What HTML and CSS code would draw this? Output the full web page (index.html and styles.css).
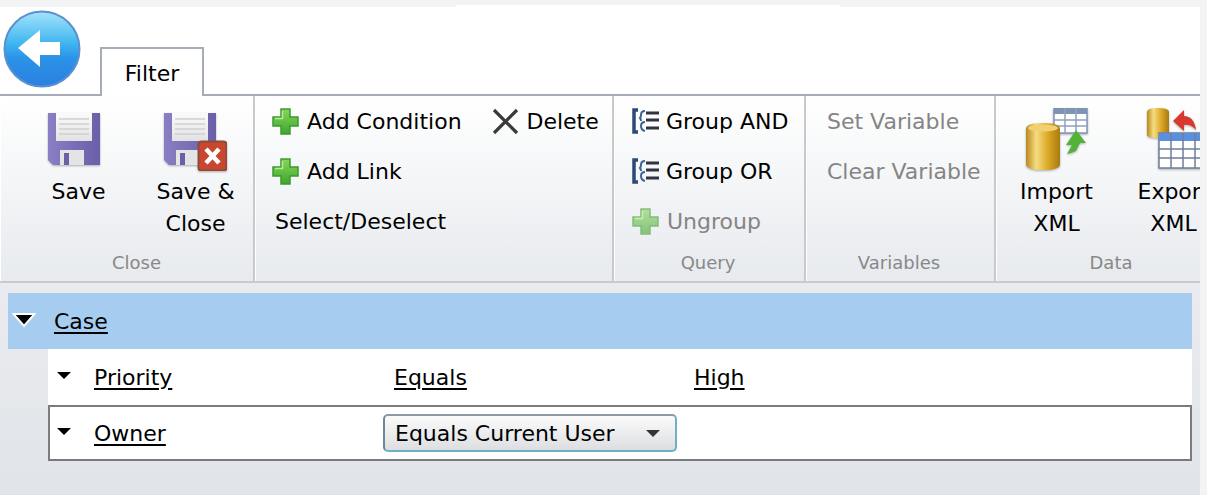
FILE: index.html
```html
<!DOCTYPE html>
<html lang="en">
<head>
<meta charset="UTF-8">
<meta name="viewport" content="width=device-width, initial-scale=1.0">
<title>Filter</title>
<link rel="stylesheet" href="styles.css">
</head>
<body>

<svg class="sprite" width="0" height="0" aria-hidden="true">
  <defs>
    <linearGradient id="backFill" x1="0" y1="0" x2="0" y2="1">
      <stop offset="0" stop-color="#a4e4fa"/>
      <stop offset="0.42" stop-color="#41b6f0"/>
      <stop offset="0.62" stop-color="#2b93e8"/>
      <stop offset="1" stop-color="#2a7fe0"/>
    </linearGradient>
    <linearGradient id="diskFill" x1="0" y1="0" x2="1" y2="0">
      <stop offset="0" stop-color="#8a7fc4"/>
      <stop offset="1" stop-color="#6a5fa8"/>
    </linearGradient>
    <linearGradient id="labelFill" x1="0" y1="0" x2="0" y2="1">
      <stop offset="0" stop-color="#fbfbfb"/>
      <stop offset="1" stop-color="#e2e2e2"/>
    </linearGradient>
    <linearGradient id="plusFill" x1="0" y1="0" x2="0" y2="1">
      <stop offset="0" stop-color="#86d65c"/>
      <stop offset="1" stop-color="#3fa62c"/>
    </linearGradient>
    <linearGradient id="barrel" x1="0" y1="0" x2="1" y2="0">
      <stop offset="0" stop-color="#b98a1c"/>
      <stop offset="0.3" stop-color="#f5dc82"/>
      <stop offset="0.65" stop-color="#dca824"/>
      <stop offset="1" stop-color="#a87a12"/>
    </linearGradient>
    <symbol id="disk" viewBox="0 0 52 52">
      <path d="M0 0H52V52H5L0 47Z" fill="url(#diskFill)"/>
      <rect x="8" y="0" width="36" height="28" fill="url(#labelFill)"/>
      <path d="M11 6H41M11 11H41M11 16H41M11 21H41" stroke="#d0d0d4" stroke-width="1.5"/>
      <rect x="12" y="37" width="24" height="15" fill="#e4e4e4"/>
      <rect x="16" y="40" width="5" height="12" fill="#6a5fa8"/>
    </symbol>
    <symbol id="plus" viewBox="0 0 27 27">
      <path d="M9 1H18V9H26V18H18V26H9V18H1V9H9Z" fill="url(#plusFill)" stroke="#3c9a2c" stroke-width="1.5"/>
      <path d="M10.5 3V10.5H3" fill="none" stroke="#b4ea90" stroke-width="1.5"/>
    </symbol>
    <symbol id="brackets" viewBox="0 0 28 26">
      <path d="M6 2H2V24H6" fill="none" stroke="#2b4a78" stroke-width="3.5"/>
      <path d="M13 3Q9 3 9 7Q9 9 8 10Q9 11 9 13" fill="none" stroke="#3f6293" stroke-width="2"/>
      <path d="M13 14Q9 14 9 18Q9 22 13 23" fill="none" stroke="#3f6293" stroke-width="2"/>
      <path d="M14 5H27M14 12H27M14 20H27" stroke="#2f343e" stroke-width="3"/>
    </symbol>
  </defs>
</svg>

<div class="app">
  <div class="notch"></div>
  <header class="titlebar">
    <svg class="back" width="78" height="78" viewBox="0 0 78 78" aria-label="Back">
      <circle cx="39" cy="39" r="37.5" fill="url(#backFill)" stroke="#5c8fd0" stroke-width="2"/>
      <path d="M15 38L37 20V32H57V45H37V57Z" fill="#fff"/>
    </svg>
    <div class="tab">Filter</div>
  </header>

  <div class="ribbon">
    <section class="group group-close">
      <div class="group-body">
        <div class="big-btn">
          <div class="big-icon">
            <svg width="62" height="57" viewBox="0 0 62 57"><use href="#disk" x="0" y="5" width="52" height="52"/></svg>
          </div>
          <span>Save</span>
        </div>
        <div class="big-btn">
          <div class="big-icon">
            <svg width="63" height="63" viewBox="0 0 63 63">
              <use href="#disk" x="0" y="5" width="52" height="52"/>
              <rect x="34.5" y="33.5" width="28" height="29" rx="3" fill="#c8472f" stroke="#8e4a3c" stroke-width="2"/>
              <path d="M42 41L55 55M55 41L42 55" stroke="#fff" stroke-width="4.5"/>
            </svg>
          </div>
          <span>Save &amp;<br>Close</span>
        </div>
      </div>
      <div class="group-label">Close</div>
    </section>

    <section class="group group-edit">
      <div class="group-body">
        <div class="small-col col-add">
          <div class="small-btn"><svg class="icon" width="27" height="27"><use href="#plus"/></svg>Add Condition</div>
          <div class="small-btn"><svg class="icon" width="27" height="27"><use href="#plus"/></svg>Add Link</div>
          <div class="small-btn plain">Select/Deselect</div>
        </div>
        <div class="small-col">
          <div class="small-btn">
            <svg class="icon" width="27" height="27" viewBox="0 0 27 27"><path d="M2 2L25 25M25 2L2 25" stroke="#3a3a3a" stroke-width="3.2"/></svg>Delete
          </div>
        </div>
      </div>
    </section>

    <section class="group group-query">
      <div class="group-body">
        <div class="small-col">
          <div class="small-btn tight"><svg class="icon" width="28" height="26"><use href="#brackets"/></svg>Group AND</div>
          <div class="small-btn tight"><svg class="icon" width="28" height="26"><use href="#brackets"/></svg>Group OR</div>
          <div class="small-btn off"><svg class="icon faded" width="27" height="27"><use href="#plus"/></svg>Ungroup</div>
        </div>
      </div>
      <div class="group-label">Query</div>
    </section>

    <section class="group group-vars">
      <div class="group-body">
        <div class="small-col">
          <div class="small-btn off">Set Variable</div>
          <div class="small-btn off">Clear Variable</div>
        </div>
      </div>
      <div class="group-label">Variables</div>
    </section>

    <section class="group group-data">
      <div class="group-body">
        <div class="big-btn">
          <div class="big-icon">
            <svg width="62" height="62" viewBox="0 0 62 62">
              <rect x="28" y="0" width="33" height="25" fill="#fff" stroke="#7f93b5" stroke-width="1.5"/>
              <rect x="28" y="0" width="33" height="6" fill="#7f93b5"/>
              <path d="M39 0V25M50 0V25M28 12H61M28 18H61" stroke="#8fa2c0" stroke-width="1.5"/>
              <path d="M0 21Q0 15 17 15Q34 15 34 21V56Q34 62 17 62Q0 62 0 56Z" fill="url(#barrel)"/>
              <ellipse cx="17" cy="20" rx="15" ry="3.5" fill="#f0d070"/>
              <path d="M41 46L46 37H40L50 22L60 35H54L50 43Q46 45 41 46Z" fill="#52b338"/>
            </svg>
          </div>
          <span>Import<br>XML</span>
        </div>
        <div class="big-btn">
          <div class="big-icon">
            <svg width="54" height="62" viewBox="0 0 54 62">
              <path d="M0 4Q0 0 11 0Q22 0 22 4V27Q22 30 11 30Q0 30 0 27Z" fill="url(#barrel)"/>
              <path d="M26 13L37 2V8Q47 8 49 22Q44 16 37 17V23Z" fill="#d8382e"/>
              <rect x="12" y="25" width="46" height="35" fill="#fff" stroke="#6d7f9c" stroke-width="1.5"/>
              <rect x="12" y="25" width="46" height="8" fill="#5a8fe0"/>
              <path d="M24 25V60M36 25V60M48 25V60M12 41H58M12 50H58" stroke="#6d7f9c" stroke-width="1.5"/>
            </svg>
          </div>
          <span>Export<br>XML</span>
        </div>
      </div>
      <div class="group-label">Data</div>
    </section>
  </div>

  <main class="content">
    <div class="tree-row case-row">
      <svg class="case-caret" width="24" height="16" viewBox="0 0 24 16"><path d="M1.5 2H22.5L12 14Z" fill="#000" stroke="#fff" stroke-width="2"/></svg>
      <a class="link">Case</a>
    </div>
    <div class="tree-row cond-row">
      <span class="caret"></span>
      <span class="cell"><a class="link">Priority</a></span>
      <span class="cell"><a class="link">Equals</a></span>
      <span class="cell"><a class="link">High</a></span>
    </div>
    <div class="tree-row cond-row is-selected">
      <span class="caret"></span>
      <span class="cell cell-short"><a class="link">Owner</a></span>
      <div class="dropdown">Equals Current User<span class="dropdown-arrow"></span></div>
    </div>
  </main>
</div>

</body>
</html>
```

FILE: styles.css
```css
html, body { height: 100%; }
body {
  margin: 0;
  background: #f1f3f5;
  font-family: "DejaVu Sans", Verdana, sans-serif;
  font-size: 22px;
  color: #000;
  overflow: hidden;
}
.sprite { display: block; }
.app {
  width: 1200px;
  height: 495px;
  display: flex; flex-direction: column;
  overflow: hidden;
}
.notch { width: 384px; height: 2px; margin: 5px 0 0 456px; background: #fff; }

/* title area */
.titlebar {
  position: relative;
  height: 87px;
  display: flex; align-items: flex-end;
  background: #fff;
  border-bottom: 2px solid #a5abb8;
}
.back { position: absolute; left: 3px; top: 3px; }
.tab {
  width: 100px; height: 45px;
  padding-top: 2px;
  margin: 0 0 -2px 100px;
  display: flex; align-items: center; justify-content: center;
  background: #fff;
  border: 2px solid #a5abb8; border-bottom: none;
}

/* ribbon */
.ribbon {
  height: 185px;
  flex: none;
  display: flex;
  background: linear-gradient(to bottom, #fff, #e7eaee);
  border-bottom: 2px solid #c9cacc;
  overflow: hidden;
}
.group {
  flex: none;
  box-sizing: border-box;
  display: flex; flex-direction: column;
  border-right: 2px solid #c8c9cb;
  box-shadow: inset 1px 0 0 #fff;
}
.group-close { width: 255px; padding-left: 20px; }
.group-edit { width: 359px; padding-left: 17px; }
.group-query { width: 192px; padding-left: 18px; }
.group-vars { width: 190px; padding-left: 21px; }
.group-data { width: 228px; padding-left: 2px; border-right: none; }
.group-body { flex: 1; display: flex; min-height: 0; }
.group-label {
  height: 28px;
  margin-bottom: 5px;
  display: flex; align-items: center; justify-content: center;
  font-size: 18px;
  color: #888;
}
.group-query .group-label { margin: 0 2px 5px -18px; }
.group-vars .group-label { margin: 0 2px 5px -21px; }

.big-btn {
  width: 117px;
  flex: none;
  padding-top: 12px;
  text-align: center;
  line-height: 32px;
}
.big-icon { height: 62px; margin-bottom: 6px; display: flex; justify-content: center; }
.big-icon svg { filter: drop-shadow(0 1px 1px rgba(0, 0, 0, 0.3)); }

.small-col { display: flex; flex-direction: column; }
.col-add { width: 219.5px; }
.small-btn {
  height: 50px;
  display: flex; align-items: center; gap: 8px;
  white-space: nowrap;
}
.small-btn.tight { gap: 6px; }
.small-btn.plain { padding-left: 3px; }
.small-btn.off { color: #858585; }
.icon { flex: none; }
.faded { opacity: 0.6; }

/* filter tree */
.content {
  flex: 1;
  padding: 10px 8px 0;
  background: linear-gradient(to bottom, #e9ebef, #e1e4e8);
}
.tree-row { height: 56px; display: flex; align-items: center; box-sizing: border-box; }
.link { color: #000; text-decoration: underline; text-underline-offset: 3px; }
.case-row { background: #a6cdf0; padding-left: 4px; }
.case-caret { margin: -2px 18px 0 0; flex: none; }
.cond-row { margin-left: 40px; padding-left: 9px; background: #fff; }
.caret {
  width: 0; height: 0;
  flex: none;
  margin: -3px 23px 0 0;
  border-left: 7.5px solid transparent;
  border-right: 7.5px solid transparent;
  border-top: 7px solid #000;
}
.cell { width: 300px; flex: none; }
.is-selected { border: 2px solid #7b7b7b; padding-left: 7px; }
.is-selected .cell-short { width: 289px; }
.dropdown {
  width: 294px; height: 38px;
  box-sizing: border-box;
  padding-left: 10px;
  display: flex; align-items: center; justify-content: space-between;
  background: linear-gradient(to bottom, #fbfbfb, #dcdee1);
  border: 2px solid #6fb0c6;
  border-top-color: #8a9aa6; border-left-color: #6d8795;
  border-radius: 5px;
}
.dropdown-arrow {
  width: 0; height: 0;
  margin-right: 15px;
  border-left: 7px solid transparent;
  border-right: 7px solid transparent;
  border-top: 7px solid #333;
}
```
